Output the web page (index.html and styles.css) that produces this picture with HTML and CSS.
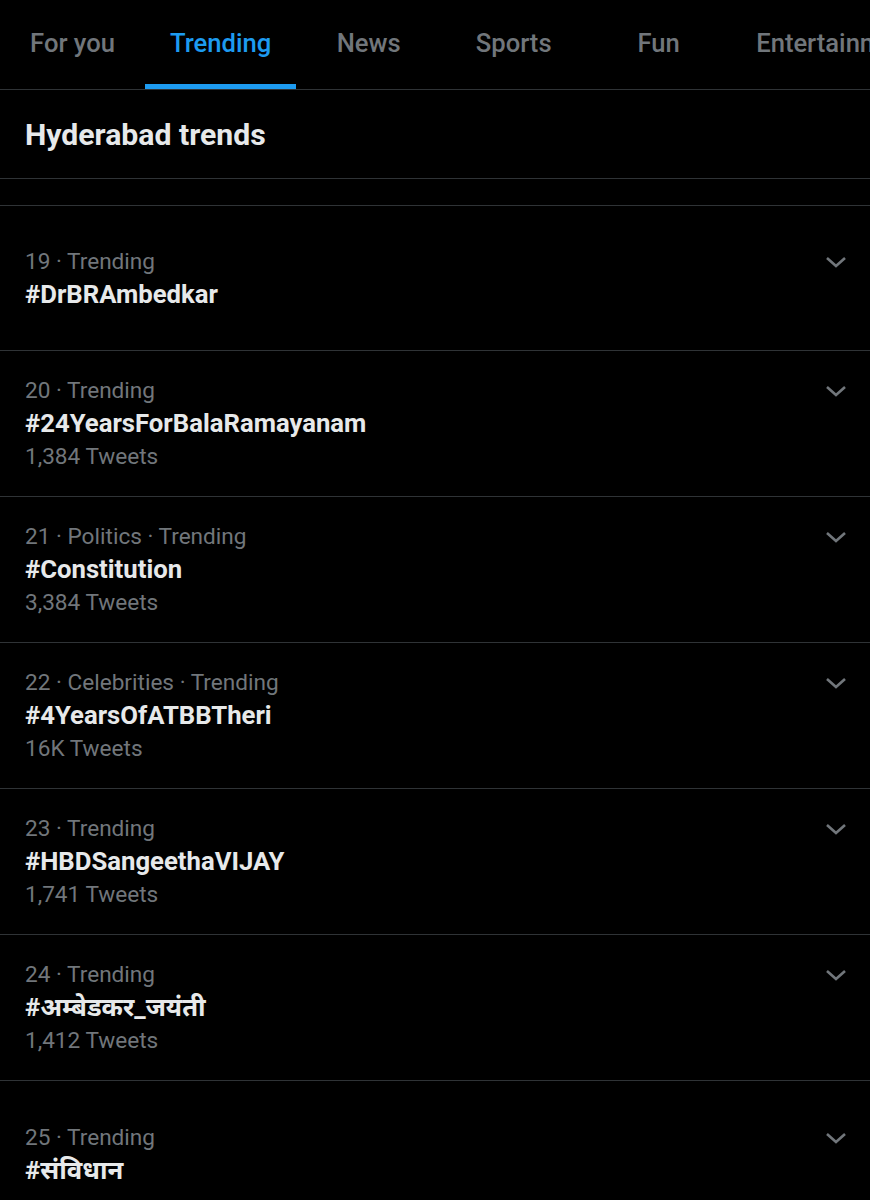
FILE: index.html
```html
<!DOCTYPE html>
<html lang="en">
<head>
    <meta charset="UTF-8">
    <meta name="viewport" content="width=device-width, initial-scale=1.0">
    <title>Explore - Trending</title>
    <link rel="stylesheet" href="styles.css">
</head>
<body>
    <!-- Top tabs -->
    <nav class="tabs">
        <div class="tab">For you</div>
        <div class="tab active">Trending</div>
        <div class="tab">News</div>
        <div class="tab">Sports</div>
        <div class="tab">Fun</div>
        <div class="tab">Entertainment</div>
    </nav>

    <!-- Section heading -->
    <h1 class="heading">Hyderabad trends</h1>
    <div class="spacer"></div>

    <!-- Trend list -->
    <div class="trends">
        <div class="trend">
            <div class="trend-body">
                <div class="trend-text">
                    <div class="meta">19 · Trending</div>
                    <div class="title">#DrBRAmbedkar</div>
                </div>
                <svg class="chevron" viewBox="0 0 24 24"><path d="M3 8 L12 16 L21 8"/></svg>
            </div>
        </div>
        <div class="trend">
            <div class="trend-body">
                <div class="trend-text">
                    <div class="meta">20 · Trending</div>
                    <div class="title">#24YearsForBalaRamayanam</div>
                    <div class="count">1,384 Tweets</div>
                </div>
                <svg class="chevron" viewBox="0 0 24 24"><path d="M3 8 L12 16 L21 8"/></svg>
            </div>
        </div>
        <div class="trend">
            <div class="trend-body">
                <div class="trend-text">
                    <div class="meta">21 · Politics · Trending</div>
                    <div class="title">#Constitution</div>
                    <div class="count">3,384 Tweets</div>
                </div>
                <svg class="chevron" viewBox="0 0 24 24"><path d="M3 8 L12 16 L21 8"/></svg>
            </div>
        </div>
        <div class="trend">
            <div class="trend-body">
                <div class="trend-text">
                    <div class="meta">22 · Celebrities · Trending</div>
                    <div class="title">#4YearsOfATBBTheri</div>
                    <div class="count">16K Tweets</div>
                </div>
                <svg class="chevron" viewBox="0 0 24 24"><path d="M3 8 L12 16 L21 8"/></svg>
            </div>
        </div>
        <div class="trend">
            <div class="trend-body">
                <div class="trend-text">
                    <div class="meta">23 · Trending</div>
                    <div class="title">#HBDSangeethaVIJAY</div>
                    <div class="count">1,741 Tweets</div>
                </div>
                <svg class="chevron" viewBox="0 0 24 24"><path d="M3 8 L12 16 L21 8"/></svg>
            </div>
        </div>
        <div class="trend">
            <div class="trend-body">
                <div class="trend-text">
                    <div class="meta">24 · Trending</div>
                    <div class="title">#अम्बेडकर_जयंती</div>
                    <div class="count">1,412 Tweets</div>
                </div>
                <svg class="chevron" viewBox="0 0 24 24"><path d="M3 8 L12 16 L21 8"/></svg>
            </div>
        </div>
        <div class="trend">
            <div class="trend-body">
                <div class="trend-text">
                    <div class="meta">25 · Trending</div>
                    <div class="title">#संविधान</div>
                </div>
                <svg class="chevron" viewBox="0 0 24 24"><path d="M3 8 L12 16 L21 8"/></svg>
            </div>
        </div>
    </div>
</body>
</html>
```

FILE: styles.css
```css
/* Page base */
body {
    margin: 0;
    background: #000;
    color: #e7e9ea;
    font-family: Roboto, "Noto Sans", "Noto Sans Devanagari", "Liberation Sans", sans-serif;
    overflow: hidden;
}

/* Tab bar */
.tabs {
    display: flex;
    height: 89px;
    border-bottom: 1px solid #2f3336;
    white-space: nowrap;
    overflow: hidden;
}
.tab {
    flex: 0 0 auto;
    min-width: 145px;
    padding: 0 25px 4px;
    box-sizing: border-box;
    display: flex;
    align-items: center;
    justify-content: center;
    font-size: 25.6px;
    font-weight: 500;
    color: #71767b;
}
.tab.active {
    color: #1d9bf0;
    min-width: 150px;
    box-shadow: inset 0 -5px 0 #1d9bf0;
}

/* Heading */
.heading {
    margin: 0;
    height: 88px;
    padding: 0 25px;
    display: flex;
    align-items: center;
    font-size: 30.2px;
    font-weight: 700;
    border-bottom: 1px solid #2f3336;
}
.spacer {
    height: 26px;
    border-bottom: 1px solid #2f3336;
}

/* Trend rows */
.trend {
    display: flex;
    align-items: center;
    min-height: 146px;
    box-sizing: border-box;
    padding: 0 22px 0 25px;
    border-bottom: 1px solid #2f3336;
}
.trend:first-child {
    min-height: 145px;
}
.trend-body {
    flex: 1;
    display: flex;
    align-items: flex-start;
}
.trend-text {
    flex: 1;
}
.meta,
.count {
    font-size: 22.6px;
    line-height: 33px;
    color: #71767b;
}
.title {
    font-size: 25.7px;
    font-weight: 700;
    line-height: 33px;
    color: #e7e9ea;
}
.chevron {
    flex: 0 0 24px;
    width: 24px;
    height: 24px;
    margin-top: 5px;
    fill: none;
    stroke: #71767b;
    stroke-width: 2.6;
}
```
